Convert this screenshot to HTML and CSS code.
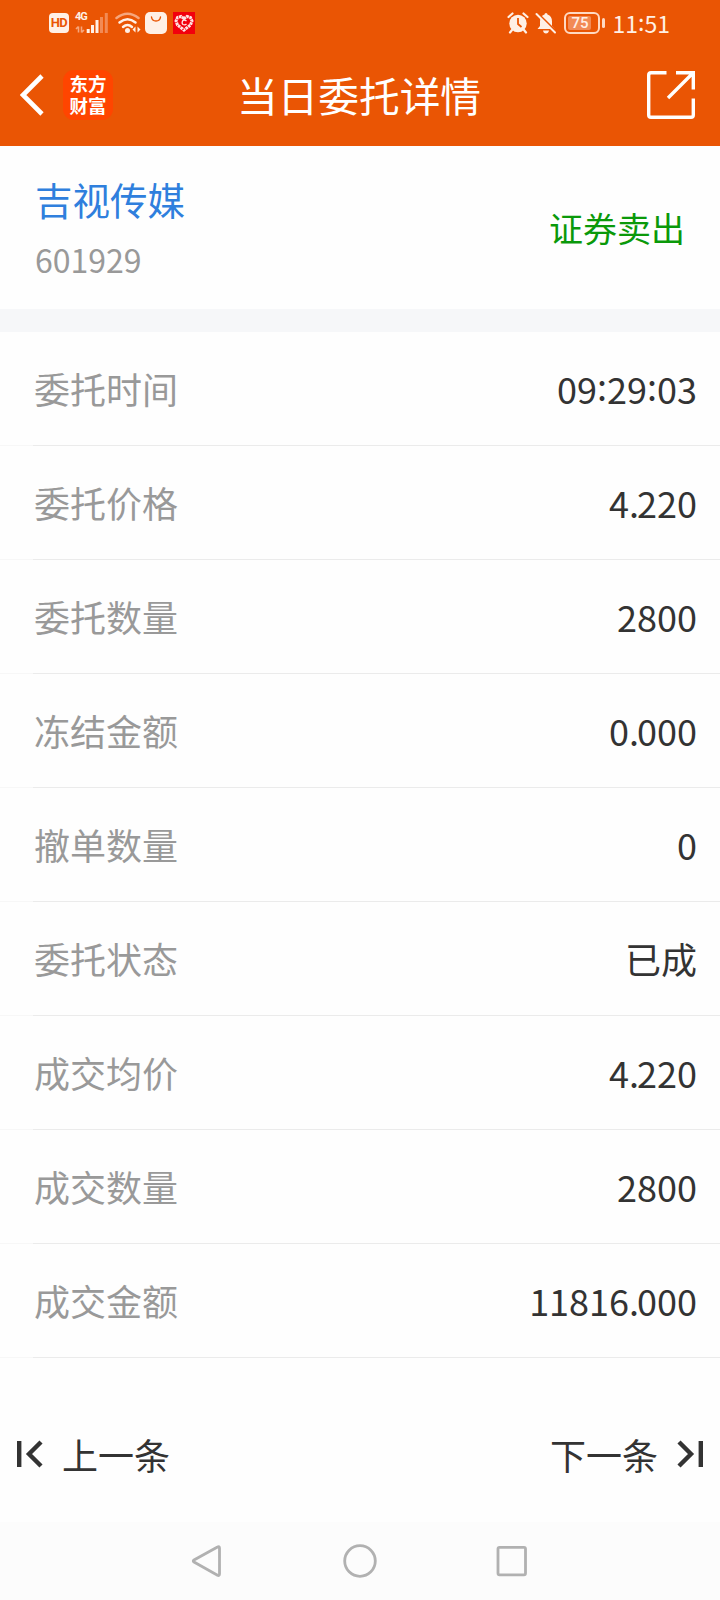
FILE: index.html
```html
<!DOCTYPE html>
<html lang="zh-CN">
<head>
    <meta charset="UTF-8">
    <meta name="viewport" content="width=device-width, initial-scale=1.0">
    <title>当日委托详情</title>
    <link rel="stylesheet" href="styles.css">
</head>
<body>
    <div class="app">
        <header class="header">
            <div class="status-bar">
                <div class="status-left">
                    <span class="hd">HD</span>
                    <div class="signal">
                        <span class="network">4G</span>
                        <svg width="34" height="22" viewBox="0 0 34 22">
                            <path d="M3.500 14.500v6M1 17l2.500-2.500M6.500 14.500v6M6.500 20.500l2.500-2.500" stroke="#f6a67d" stroke-width="1.600" fill="none"/>
                            <path d="M13.200 17v4M17.500 13v8M22 8v13" stroke="#fff0e6" stroke-width="3"/>
                            <path d="M26.500 5v16M31.300 1v20" stroke="#f28a55" stroke-width="3"/>
                        </svg>
                    </div>
                    <svg class="wifi" width="26" height="22" viewBox="0 0 26 22">
                        <g fill="none" stroke-width="2.500" stroke-linecap="round">
                            <path d="M1.500 6Q12.500-2.500 23.500 6" stroke="#f6a67d"/>
                            <path d="M4.500 10.500Q12.500 4 20.500 10.500M8 15Q12.500 11 17 15" stroke="#fff0e6"/>
                        </g>
                        <circle cx="12.500" cy="18.500" r="2.500" fill="#fff0e6"/>
                        <path d="M20.500 14.500v6l-3-3zM22.500 14.500v6l3-3z" fill="#fff0e6"/>
                    </svg>
                    <svg class="bag" width="22" height="22" viewBox="0 0 22 22">
                        <rect width="22" height="22" rx="5" fill="#fff0e6"/>
                        <path d="M6.500 5Q7 9 11 9Q15 9 15.500 5" fill="none" stroke="#ea5504" stroke-width="1.400" stroke-linecap="round"/>
                    </svg>
                    <svg class="heart" width="22" height="22" viewBox="0 0 22 22">
                        <rect width="22" height="22" fill="#f2000d"/>
                        <path d="M11 6.500L8 4.500L4.500 5.500L3 9L4.500 13L11 18L17.500 13L19 9L17.500 5.500L14 4.500Z" fill="none" stroke="#ffe3e3" stroke-width="3" stroke-dasharray="2.600 0.600"/>
                        <path d="M13.500 9Q11 7 9.500 9Q8.500 11.500 10 12.500Q12 13.500 13.500 12" stroke="#ffe3e3" stroke-width="1.300" fill="none"/>
                    </svg>
                </div>
                <div class="status-right">
                    <svg width="22" height="22" viewBox="0 0 22 22">
                        <circle cx="11" cy="11.500" r="8.700" fill="#fff0e6"/>
                        <path d="M1.500 5L5.500 1.500M20.500 5L16.500 1.500M5 18l-2 2.500M17 18l2 2.500" stroke="#fff0e6" stroke-width="2.200" stroke-linecap="round"/>
                        <path d="M11 6v6l3.500 3" stroke="#ea5504" stroke-width="1.800" fill="none"/>
                    </svg>
                    <svg class="bell" width="22" height="22" viewBox="0 0 22 22">
                        <path d="M11 1Q12.500 1 12.500 2.500Q17 4 17 9.500V14L19.500 17H2.500L5 14V9.500Q5 4 9.500 2.500Q9.500 1 11 1ZM8 18.500h6Q13.500 21.500 11 21.500Q8.500 21.500 8 18.500Z" fill="#fff0e6"/>
                        <path d="M2.500 1L22 20.500" stroke="#ea5504" stroke-width="2"/>
                        <path d="M1.500 2L20 20.500" stroke="#fff0e6" stroke-width="2" stroke-linecap="round"/>
                    </svg>
                    <div class="battery"><span class="battery-level">75</span></div>
                    <span class="battery-tip"></span>
                    <span class="time">11<span class="colon">:</span>51</span>
                </div>
            </div>
            <div class="title-bar">
                <div class="title-left">
                    <svg width="24" height="42" viewBox="0 0 24 42">
                        <path d="M22 2L3 21L22 40" fill="none" stroke="#fff" stroke-width="4.600"/>
                    </svg>
                    <div class="logo">东方<br>财富</div>
                </div>
                <h1 class="title">当日委托详情</h1>
                <svg class="share" width="48" height="48" viewBox="0 0 48 48">
                    <path d="M19.500 1.700H4Q1.700 1.700 1.700 4V44Q1.700 46.300 4 46.300H44Q46.300 46.300 46.300 44V27.500M29 1.700H46.300V18.500M46 2L21 27" fill="none" stroke="#fff" stroke-width="3.400"/>
                </svg>
            </div>
        </header>

        <section class="stock">
            <div>
                <div class="stock-name">吉视传媒</div>
                <div class="stock-code">601929</div>
            </div>
            <div class="trade-type">证券卖出</div>
        </section>

        <main class="details">
            <div class="row"><span class="label">委托时间</span><span class="value">09<span class="colon">:</span>29<span class="colon">:</span>03</span></div>
            <div class="row"><span class="label">委托价格</span><span class="value">4<span class="dot">.</span>220</span></div>
            <div class="row"><span class="label">委托数量</span><span class="value">2800</span></div>
            <div class="row"><span class="label">冻结金额</span><span class="value">0<span class="dot">.</span>000</span></div>
            <div class="row"><span class="label">撤单数量</span><span class="value">0</span></div>
            <div class="row"><span class="label">委托状态</span><span class="value">已成</span></div>
            <div class="row"><span class="label">成交均价</span><span class="value">4<span class="dot">.</span>220</span></div>
            <div class="row"><span class="label">成交数量</span><span class="value">2800</span></div>
            <div class="row"><span class="label">成交金额</span><span class="value">11816<span class="dot">.</span>000</span></div>
        </main>

        <div class="pager">
            <div class="page-link">
                <svg width="26" height="28" viewBox="0 0 26 28">
                    <path d="M2.200 1V27M24 2L12 14L24 26" fill="none" stroke="#333" stroke-width="4.400"/>
                </svg>
                <span>上一条</span>
            </div>
            <div class="page-link">
                <span>下一条</span>
                <svg width="26" height="28" viewBox="0 0 26 28">
                    <path d="M23.800 1V27M2 2L14 14L2 26" fill="none" stroke="#333" stroke-width="4.400"/>
                </svg>
            </div>
        </div>

        <nav class="nav-bar">
            <svg width="34" height="34" viewBox="0 0 34 34">
                <path d="M26.500 3Q28.500 1.800 28.500 4V30Q28.500 32.200 26.500 31.200L3 18Q1.500 17 3 16Z" fill="none" stroke="#b1b1b1" stroke-width="2.800"/>
            </svg>
            <svg width="34" height="34" viewBox="0 0 34 34">
                <circle cx="17" cy="17" r="15.300" fill="none" stroke="#b1b1b1" stroke-width="2.800"/>
            </svg>
            <svg width="34" height="34" viewBox="0 0 34 34">
                <rect x="3" y="3.300" width="27.500" height="27.500" rx="1.500" fill="none" stroke="#b1b1b1" stroke-width="2.800"/>
            </svg>
        </nav>
    </div>
</body>
</html>
```

FILE: styles.css
```css
* {
    box-sizing: border-box;
}

body {
    margin: 0;
    font-family: 'Noto Sans CJK SC', sans-serif;
    background: #fefefe;
    color: #333;
}

svg {
    display: block;
    flex-shrink: 0;
}

.app {
    width: 720px;
    height: 1600px;
    display: flex;
    flex-direction: column;
}

.header {
    height: 146px;
    background: #ea5504;
    color: #fff;
}

.status-bar {
    height: 46px;
    padding: 0 50px 0 49px;
    display: flex;
    justify-content: space-between;
    align-items: center;
    color: #fff0e6;
}

.status-left,
.status-right {
    display: flex;
    align-items: center;
}

.hd {
    width: 20px;
    height: 20px;
    border-radius: 4px;
    background: #fff0e6;
    color: #ea5504;
    font: bold 13px/20px 'Roboto', sans-serif;
    letter-spacing: -0.5px;
    text-align: center;
}

.signal {
    position: relative;
    margin-left: 6px;
}

.network {
    position: absolute;
    left: 0;
    top: 0;
    font: bold 11px/10px 'Roboto', sans-serif;
    letter-spacing: -1px;
}

.wifi {
    margin-left: 6px;
}

.bag {
    margin-left: 4px;
}

.heart {
    margin-left: 6px;
}

.bell {
    margin-left: 6px;
}

.battery {
    width: 36px;
    height: 22px;
    margin-left: 7px;
    padding: 2px;
    border: 2px solid #ffd9c2;
    border-radius: 6px;
}

.battery-level {
    display: block;
    width: 23px;
    height: 14px;
    border-radius: 2px;
    background: #f28a55;
    font: 500 15px/14px 'Roboto', sans-serif;
    text-align: center;
    text-indent: 2px;
}

.battery-tip {
    width: 3px;
    height: 10px;
    margin-left: 2px;
    border-radius: 2px;
    background: #ffd9c2;
}

.time {
    margin-left: 8px;
    font-size: 23px;
    line-height: 44px;
}

.title-bar {
    height: 98px;
    padding: 0 25px 0 20px;
    display: grid;
    grid-template-columns: 1fr auto 1fr;
    align-items: center;
}

.title-left {
    display: flex;
    align-items: center;
    gap: 19px;
}

.logo {
    width: 50px;
    height: 50px;
    padding-top: 2px;
    border-radius: 11px;
    background: #ff4500;
    font-size: 18.5px;
    font-weight: 700;
    line-height: 22px;
    text-align: center;
}

.title {
    margin: 0 -3px 0 0;
    font-size: 40.7px;
    font-weight: 400;
    line-height: 60px;
}

.share {
    justify-self: end;
}

.stock {
    height: 186px;
    padding: 25px 35px 0;
    display: flex;
    justify-content: space-between;
    border-bottom: 23px solid #f6f7f9;
}

.stock-name {
    color: #2f7fdd;
    font-size: 37.5px;
    line-height: 56px;
}

.stock-code {
    margin-top: 8px;
    color: #999;
    font-size: 32px;
    line-height: 48px;
}

.trade-type {
    padding-top: 32px;
    color: #0a990a;
    font-size: 34px;
    line-height: 50px;
}

.row {
    height: 114px;
    padding: 0 23px 2px 34px;
    display: flex;
    justify-content: space-between;
    align-items: center;
    border-bottom: 1px solid #ebebeb;
    border-image: linear-gradient(to right, #f7f7f7 34px, #ebebeb 34px) 1;
    font-size: 36px;
    line-height: 54px;
}

.label {
    color: #999;
}

.colon {
    vertical-align: 0.07em;
    line-height: 1;
}

.dot {
    letter-spacing: -2px;
}

.pager {
    height: 164px;
    padding: 28px 17px 0;
    display: flex;
    justify-content: space-between;
    align-items: center;
    font-size: 36px;
    line-height: 54px;
}

.page-link {
    display: flex;
    align-items: center;
    gap: 19px;
}

.nav-bar {
    height: 78px;
    background: #fcfcfc;
    display: flex;
    justify-content: center;
    align-items: center;
    gap: 118px;
}
```
